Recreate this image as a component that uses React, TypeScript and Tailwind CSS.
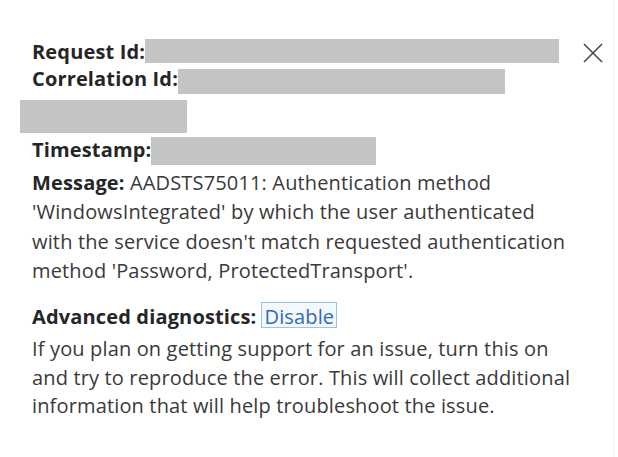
import React from "react";

export default function App() {
  return (
    <div className="w-[618px] h-[457px] bg-white flex" style={{ fontFamily: '"Open Sans", "Noto Sans", sans-serif' }}>
      <div className="relative w-[614px] h-full border-r border-[#f1f1f1] pl-[32px] pt-[38px] text-[20px] tracking-[0.15px] text-[#3a3a3a]">
        <button className="absolute left-[583px] top-[43px] w-[20px] h-[20px] flex items-center justify-center" aria-label="Close">
          <svg width="20" height="20" viewBox="0 0 20 20">
            <path d="M1 1 L19 19 M19 1 L1 19" stroke="#4a4a4a" strokeWidth="1.6" fill="none" />
          </svg>
        </button>

        <div className="h-[27px] flex items-start whitespace-nowrap">
          <span className="leading-[27px] font-bold text-[#262626]">Request Id:</span>
          <span className="mt-[1px] inline-block h-[24px] w-[414px] bg-[#c4c4c4]" />
        </div>
        <div className="h-[29px] flex items-start whitespace-nowrap">
          <span className="leading-[27px] font-bold text-[#262626]">Correlation Id:</span>
          <span className="mt-[4px] inline-block h-[25px] w-[327px] bg-[#c4c4c4]" />
        </div>
        <div className="mt-[6px] -ml-[12px] h-[33px] w-[167px] bg-[#c4c4c4]" />
        <div className="mt-[4px] h-[28px] flex items-start whitespace-nowrap">
          <span className="leading-[26px] font-bold text-[#262626]">Timestamp:</span>
          <span className="inline-block h-[28px] w-[225px] bg-[#c4c4c4]" />
        </div>

        <p className="mt-[3px] leading-[29.3px] whitespace-nowrap">
          <span className="font-bold text-[#262626]">Message:</span> AADSTS75011: Authentication method
          <br />
          'WindowsIntegrated' by which the user authenticated
          <br />
          with the service doesn't match requested authentication
          <br />
          method 'Password, ProtectedTransport'.
        </p>

        <div className="mt-[17px] h-[28px] flex items-start whitespace-nowrap">
          <span className="leading-[30px] font-bold text-[#262626]">Advanced diagnostics:</span>
          <a href="#" className="ml-[5px] h-[26px] leading-[28px] px-[2px] border border-[#9cc2ec] bg-[#f3f8fe] text-[#2f6bbd]">
            Disable
          </a>
        </div>
        <p className="mt-[5px] leading-[28.5px] whitespace-nowrap">
          If you plan on getting support for an issue, turn this on
          <br />
          and try to reproduce the error. This will collect additional
          <br />
          information that will help troubleshoot the issue.
        </p>
      </div>
    </div>
  );
}
